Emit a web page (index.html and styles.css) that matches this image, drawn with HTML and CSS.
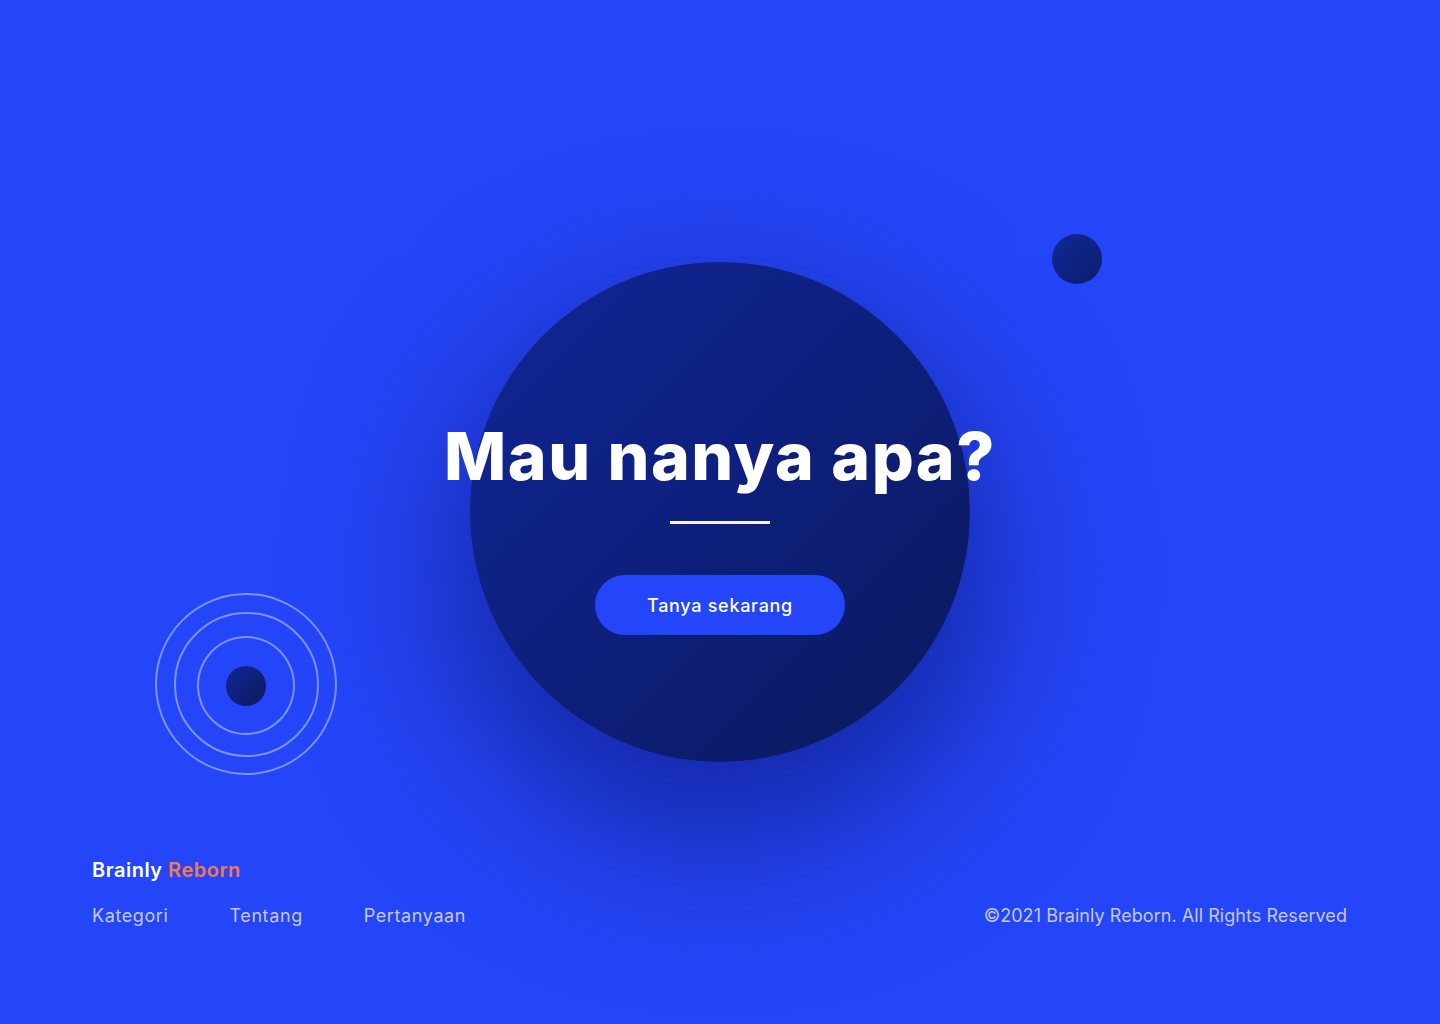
FILE: index.html
```html
<!DOCTYPE html>
<html lang="id">
<head>
<meta charset="utf-8">
<title>Brainly Reborn</title>
<link rel="stylesheet" href="styles.css">
</head>
<body>
<div class="page">
  <div class="rings">
    <span class="ring ring-3"></span>
    <span class="ring ring-2"></span>
    <span class="ring ring-1"></span>
    <span class="ring-dot"></span>
  </div>
  <span class="orb"></span>
  <main class="hero">
    <div class="circle">
      <h1 class="title">Mau nanya apa?</h1>
      <span class="divider"></span>
      <a class="cta" href="#">Tanya sekarang</a>
    </div>
  </main>
  <footer class="footer">
    <div class="brand">Brainly <span class="brand-accent">Reborn</span></div>
    <div class="footer-row">
      <nav class="links">
        <a href="#">Kategori</a>
        <a href="#">Tentang</a>
        <a href="#">Pertanyaan</a>
      </nav>
      <p class="copy">©2021 Brainly Reborn. All Rights Reserved</p>
    </div>
  </footer>
</div>
</body>
</html>
```
FILE: styles.css
```css
* { box-sizing: border-box; }
html, body { margin: 0; padding: 0; }
body {
  background: #2546f8;
  font-family: "Inter", "Noto Sans", "Liberation Sans", sans-serif;
  color: #fff;
  overflow: hidden;
}
.page {
  position: relative;
  width: 1440px;
  height: 1024px;
  display: flex;
  flex-direction: column;
}
.hero {
  display: flex;
  justify-content: center;
  padding-top: 262px;
}
.circle {
  width: 500px;
  height: 500px;
  border-radius: 50%;
  background: linear-gradient(135deg, #102696 0%, #0e1f7c 50%, #0b195a 100%);
  box-shadow: 0 60px 140px 30px rgba(14, 28, 130, 0.65);
  display: flex;
  flex-direction: column;
  align-items: center;
  padding-top: 154px;
  position: relative;
  z-index: 1;
}
.title {
  margin: 0;
  font-size: 66px;
  font-weight: 800;
  line-height: 80px;
  white-space: nowrap;
  letter-spacing: 1.5px;
}
.divider {
  display: block;
  width: 100px;
  height: 3px;
  background: #f3f4fb;
  margin-top: 25px;
}
.cta {
  margin-top: 51px;
  width: 250px;
  height: 60px;
  border-radius: 30px;
  background: #2546f8;
  color: #fff;
  text-decoration: none;
  font-size: 18px;
  font-weight: 500;
  letter-spacing: 0.7px;
  display: flex;
  align-items: center;
  justify-content: center;
}
.orb {
  position: absolute;
  left: 1052px;
  top: 234px;
  width: 50px;
  height: 50px;
  border-radius: 50%;
  background: linear-gradient(135deg, #112897, #0c1d6e);
}
.rings {
  position: absolute;
  left: 155px;
  top: 593px;
  width: 182px;
  height: 182px;
}
.ring {
  position: absolute;
  border-radius: 50%;
  border: 2px solid rgba(185, 198, 255, 0.6);
}
.ring-3 { left: 0; top: 0; width: 182px; height: 182px; }
.ring-2 { left: 19px; top: 19px; width: 145px; height: 145px; }
.ring-1 { left: 42px; top: 43px; width: 98px; height: 99px; }
.ring-dot {
  position: absolute;
  left: 71px;
  top: 73px;
  width: 40px;
  height: 40px;
  border-radius: 50%;
  background: linear-gradient(135deg, #112897, #0b195e);
}
.footer {
  margin-top: 96px;
  padding: 0 93px 0 92px;
  position: relative;
  z-index: 2;
}
.brand {
  font-size: 20px;
  font-weight: 600;
  line-height: 24px;
  letter-spacing: 0.5px;
  color: #fff;
}
.brand-accent { color: #f7794a; }
.footer-row {
  margin-top: 22px;
  display: flex;
  justify-content: space-between;
  align-items: center;
}
.links {
  display: flex;
  gap: 61px;
}
.links a, .copy {
  color: #c3c9ee;
  text-decoration: none;
  font-size: 18px;
  line-height: 24px;
  margin: 0;
}
.links a { letter-spacing: 0.6px; }
.copy { letter-spacing: 0.05px; }
```
